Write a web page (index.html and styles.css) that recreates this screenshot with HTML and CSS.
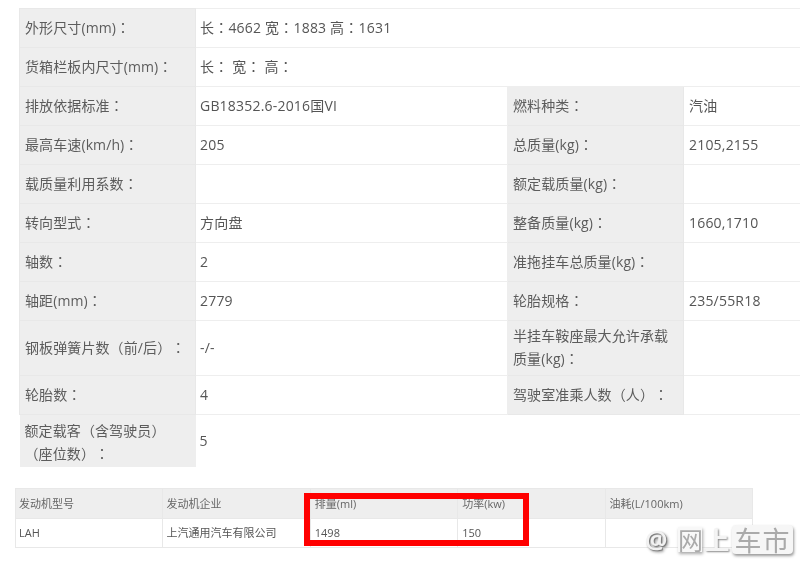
FILE: index.html
```html
<!DOCTYPE html>
<html>
<head>
<meta charset="utf-8">
<title>车辆参数</title>
<link rel="stylesheet" href="styles.css">
</head>
<body>
<main class="page">
  <table class="spec">
    <colgroup><col class="c-label"><col class="c-value"><col class="c-label"><col class="c-last"></colgroup>
    <tr class="mixed"><th>外形尺寸(mm)<span class="p">：</span></th><td colspan="3">长<span class="p">：</span>4662 宽<span class="p">：</span>1883 高<span class="p">：</span>1631</td></tr>
    <tr class="mixed"><th>货箱栏板内尺寸(mm)<span class="p">：</span></th><td colspan="3">长<span class="p">：</span> 宽<span class="p">：</span> 高<span class="p">：</span></td></tr>
    <tr><th>排放依据标准<span class="p">：</span></th><td>GB18352.6-2016国VI</td><th>燃料种类<span class="p">：</span></th><td class="end">汽油</td></tr>
    <tr><th>最高车速(km/h)<span class="p">：</span></th><td>205</td><th>总质量(kg)<span class="p">：</span></th><td class="end">2105,2155</td></tr>
    <tr><th>载质量利用系数<span class="p">：</span></th><td></td><th>额定载质量(kg)<span class="p">：</span></th><td></td></tr>
    <tr><th>转向型式<span class="p">：</span></th><td>方向盘</td><th>整备质量(kg)<span class="p">：</span></th><td class="end">1660,1710</td></tr>
    <tr><th>轴数<span class="p">：</span></th><td>2</td><th>准拖挂车总质量(kg)<span class="p">：</span></th><td></td></tr>
    <tr><th>轴距(mm)<span class="p">：</span></th><td>2779</td><th>轮胎规格<span class="p">：</span></th><td class="end">235/55R18</td></tr>
    <tr class="tall"><th>钢板弹簧片数（前/后）<span class="p">：</span></th><td>-/-</td><th>半挂车鞍座最大允许承载<br>质量(kg)<span class="p">：</span></th><td></td></tr>
    <tr><th>轮胎数<span class="p">：</span></th><td>4</td><th>驾驶室准乘人数（人）<span class="p">：</span></th><td></td></tr>
    <tr class="last"><th>额定载客（含驾驶员）<br>（座位数）<span class="p">：</span></th><td>5</td></tr>
  </table>
  <table class="engine">
    <tr><th>发动机型号</th><th>发动机企业</th><th>排量(ml)</th><th>功率(kw)</th><th>油耗(L/100km)</th></tr>
    <tr><td>LAH</td><td>上汽通用汽车有限公司</td><td>1498</td><td>150</td><td></td></tr>
  </table>
  <div class="highlight"></div>
  <div class="mark">
    <span class="at">@</span>
    <span class="mark-net">网</span>
    <span class="mark-up">上</span>
    <span class="mark-box">车市</span>
  </div>
</main>
</body>
</html>
```
FILE: styles.css
```css
html, body {
  margin: 0;
  padding: 0;
  background: #fff;
}
body {
  width: 800px;
  height: 564px;
  overflow: hidden;
}
.page {
  position: relative;
  width: 800px;
  height: 564px;
  overflow: hidden;
  padding: 8px 0 0 19px;
  box-sizing: border-box;
  font-family: "Open Sans", "Noto Sans CJK SC", sans-serif;
  color: #555;
  text-spacing-trim: space-all;
}
.p {
  font-family: "Noto Sans CJK TC", sans-serif;
}
table {
  border-collapse: collapse;
  table-layout: fixed;
  filter: blur(0.3px);
}
th, td {
  font-weight: 400;
  text-align: left;
  vertical-align: middle;
}
.spec {
  width: 840px;
  font-size: 14px;
  line-height: 22px;
}
.spec th, .spec td {
  height: 38px;
  padding: 0 5px 2px;
  border: 1px solid #eee;
  box-sizing: border-box;
  overflow: hidden;
}
.spec td {
  padding: 0 4px;
  letter-spacing: 0.2px;
}
.spec td.end {
  padding-left: 5px;
}
.spec tr.mixed td {
  padding-bottom: 2px;
}
.spec tr {
  height: 39px;
}
.spec th {
  background: #eee;
  border-color: #e8e8e8;
  color: #5c5c5c;
  letter-spacing: 0.1px;
}
.c-label { width: 176px; }
.c-value { width: 312px; }
.c-last { width: 176px; }
.spec tr.tall { height: 55px; }
.spec tr.tall th, .spec tr.tall td { height: 55px; }
.spec tr.tall th { padding-bottom: 1px; }
.spec tr.last { height: 52px; }
.spec tr.last th, .spec tr.last td { height: 52px; border: 0; }
.spec tr.last td { border-top: 1px solid #eee; }
.spec tr.last th { padding-top: 3px; padding-bottom: 0; }
.engine {
  width: 738px;
  margin: 21px 0 0 -4px;
  font-size: 11px;
  line-height: 16px;
}
.engine th, .engine td {
  padding: 0 3px;
  border: 1px solid #e8e8e8;
  box-sizing: border-box;
}
.engine th:nth-child(n+3), .engine td:nth-child(n+3) {
  padding-left: 4px;
}
.engine th {
  height: 30px;
  padding-top: 1px;
  background: #eee;
  color: #666;
}
.engine td {
  height: 29px;
  color: #555;
}
.highlight {
  position: absolute;
  left: 304px;
  top: 493px;
  width: 225px;
  height: 53px;
  box-sizing: border-box;
  border: 6px solid #f00;
}
.mark {
  position: absolute;
  left: 645px;
  top: 525px;
  height: 29px;
  display: flex;
  align-items: center;
  font-family: "Noto Sans CJK SC", sans-serif;
  font-size: 25px;
  line-height: 29px;
  white-space: nowrap;
  filter: blur(0.5px);
}
.at {
  width: 33px;
  font-family: "Open Sans", sans-serif;
  font-size: 25px;
  font-weight: 700;
  color: #f2f2f2;
  text-shadow: 1px 1px 1px #777, 2px 2px 3px #999;
}
.mark-net {
  width: 24px;
  height: 25px;
  line-height: 25px;
  text-align: center;
  background: #f8f8f8;
  color: #aaa;
  box-shadow: 1px 2px 3px #aaa;
}
.mark-up {
  width: 30px;
  text-align: center;
  font-weight: 700;
  color: #f4f4f4;
  text-shadow: 1px 1px 2px #888;
}
.mark-box {
  width: 61px;
  height: 29px;
  text-align: center;
  font-size: 27px;
  letter-spacing: 1px;
  background: #f6f6f6;
  color: #aaa;
  border-radius: 4px;
  box-shadow: 1px 2px 3px #999;
}
```
